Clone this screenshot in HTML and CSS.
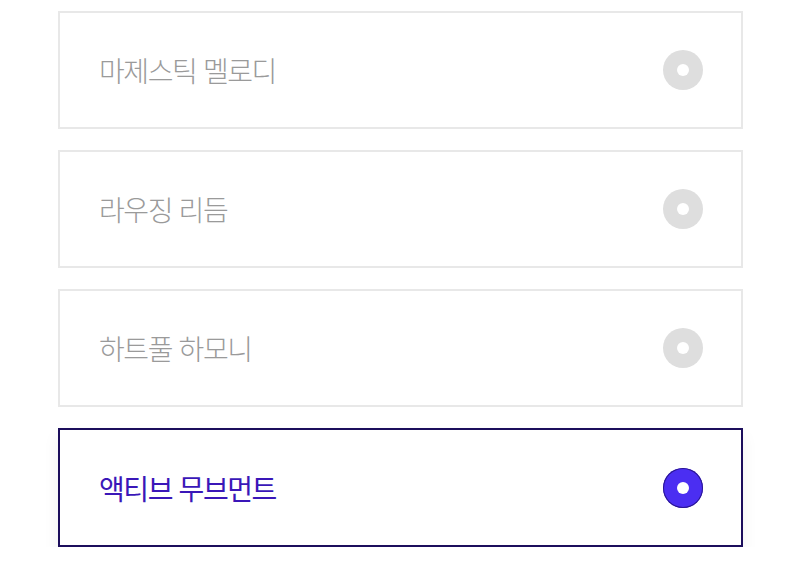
FILE: index.html
```html
<!DOCTYPE html>
<html lang="ko">
<head>
  <meta charset="UTF-8">
  <title>스타일 선택</title>
  <link rel="stylesheet" href="styles.css">
</head>
<body>
  <div class="option-list">
    <label class="option">
      <span class="option-name">마제스틱 멜로디</span>
      <span class="radio"></span>
    </label>
    <label class="option">
      <span class="option-name">라우징 리듬</span>
      <span class="radio"></span>
    </label>
    <label class="option">
      <span class="option-name">하트풀 하모니</span>
      <span class="radio"></span>
    </label>
    <label class="option selected">
      <span class="option-name">액티브 무브먼트</span>
      <span class="radio"></span>
    </label>
  </div>
</body>
</html>
```

FILE: styles.css
```css
body {
  margin: 0;
  padding: 11px 0 0;
  background: #ffffff;
  font-family: "Noto Sans CJK KR", "Noto Sans", sans-serif;
}
.option-list {
  width: 685px;
  margin: 0 0 0 58px;
  display: flex;
  flex-direction: column;
  gap: 21px;
}
.option {
  box-sizing: border-box;
  height: 118px;
  display: flex;
  align-items: center;
  justify-content: space-between;
  padding: 0 38px 0 39px;
  border: 2px solid #e8e8e8;
  background: #fff;
}
.option-name {
  font-size: 28px;
  font-weight: 300;
  color: #9a9a9a;
  letter-spacing: -1.4px;
}
.radio {
  width: 40px;
  height: 40px;
  border-radius: 50%;
  background: #dedede;
  display: flex;
  align-items: center;
  justify-content: center;
}
.radio::after {
  content: "";
  width: 12px;
  height: 12px;
  border-radius: 50%;
  background: #fff;
}
.option.selected {
  height: 119px;
  border: 2px solid #1c0e5c;
  box-shadow: 0 8px 16px rgba(0, 0, 0, 0.06);
}
.option.selected .option-name {
  color: #3a17b8;
  font-weight: 400;
}
.option.selected .radio {
  background: #4b2ef2;
  box-shadow: inset 0 0 0 1px #2a1690;
}
```
